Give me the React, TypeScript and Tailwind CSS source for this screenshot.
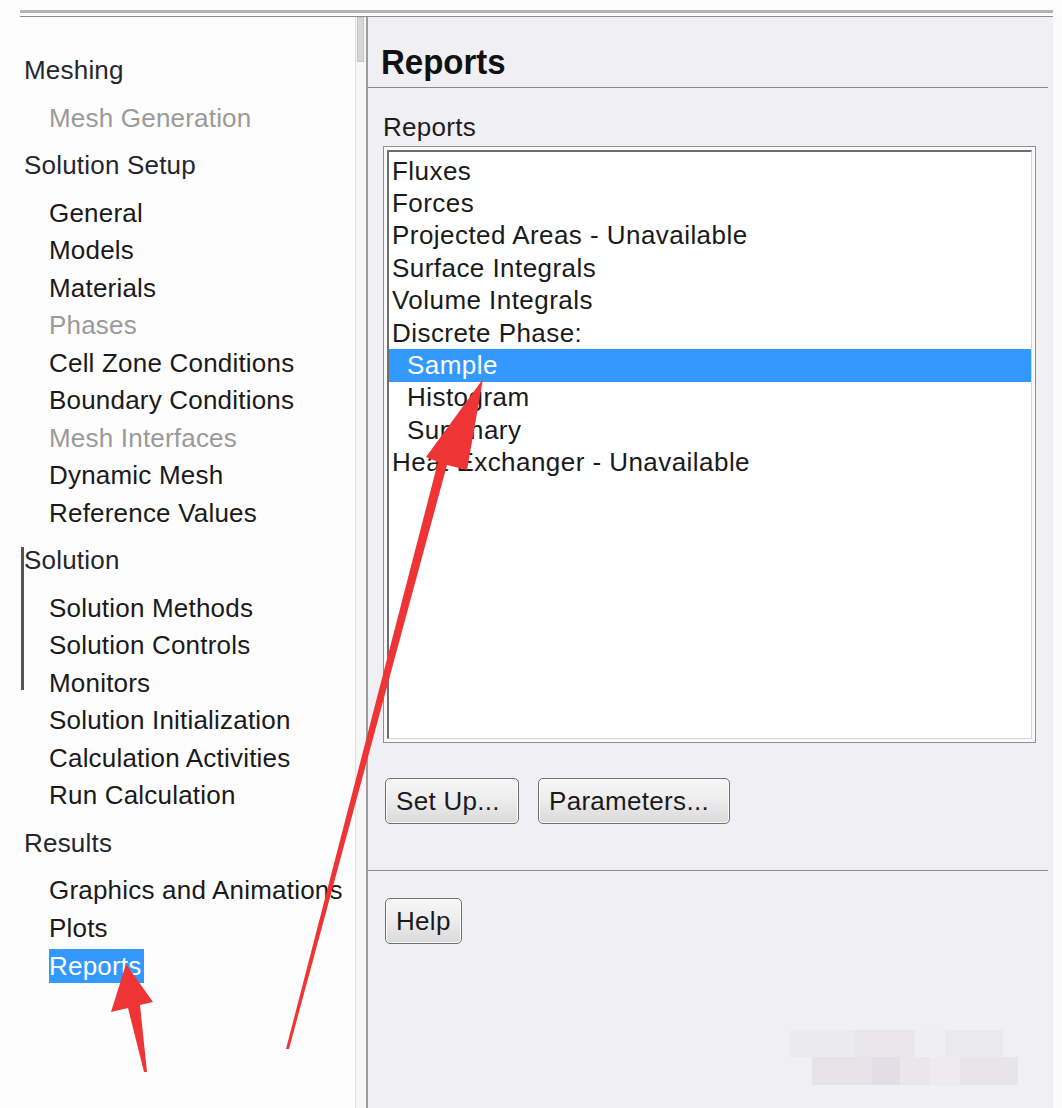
import React from "react";

type Item = { label: string; kind: "cat" | "child"; disabled?: boolean; selected?: boolean };

const nav: Item[] = [
  { label: "Meshing", kind: "cat" },
  { label: "Mesh Generation", kind: "child", disabled: true },
  { label: "Solution Setup", kind: "cat" },
  { label: "General", kind: "child" },
  { label: "Models", kind: "child" },
  { label: "Materials", kind: "child" },
  { label: "Phases", kind: "child", disabled: true },
  { label: "Cell Zone Conditions", kind: "child" },
  { label: "Boundary Conditions", kind: "child" },
  { label: "Mesh Interfaces", kind: "child", disabled: true },
  { label: "Dynamic Mesh", kind: "child" },
  { label: "Reference Values", kind: "child" },
  { label: "Solution", kind: "cat" },
  { label: "Solution Methods", kind: "child" },
  { label: "Solution Controls", kind: "child" },
  { label: "Monitors", kind: "child" },
  { label: "Solution Initialization", kind: "child" },
  { label: "Calculation Activities", kind: "child" },
  { label: "Run Calculation", kind: "child" },
  { label: "Results", kind: "cat" },
  { label: "Graphics and Animations", kind: "child" },
  { label: "Plots", kind: "child" },
  { label: "Reports", kind: "child", selected: true },
];

const reports: { label: string; sub?: boolean; selected?: boolean }[] = [
  { label: "Fluxes" },
  { label: "Forces" },
  { label: "Projected Areas - Unavailable" },
  { label: "Surface Integrals" },
  { label: "Volume Integrals" },
  { label: "Discrete Phase:" },
  { label: "Sample", sub: true, selected: true },
  { label: "Histogram", sub: true },
  { label: "Summary", sub: true },
  { label: "Heat Exchanger - Unavailable" },
];

function Btn({ label, w }: { label: string; w: string }) {
  return (
    <button
      className={`${w} h-[46px] rounded-[5px] border border-[#707070] bg-gradient-to-b from-[#f7f7f7] via-[#ececec] to-[#d9d9d9] text-left pl-[10px] text-[26px] tracking-[0.3px] leading-[30px] text-[#1a1a1a] shadow-[inset_0_0_0_1px_#fbfbfb]`}
    >
      {label}
    </button>
  );
}

export default function App() {
  return (
    <div
      className="relative w-[1062px] h-[1108px] overflow-hidden bg-[#fcfcfc]"
      style={{ fontFamily: '"Liberation Sans", Arial, sans-serif' }}
    >
      {/* top lines */}
      <div className="h-[17px] pl-[20px] pr-[9px] flex flex-col">
        <div className="h-[10px]" />
        <div className="h-[3px] bg-[#b4b4b4]" />
        <div className="h-[3px]" />
        <div className="h-[1px] bg-[#8c8c8c]" />
      </div>

      <div className="flex h-[1091px]">
        {/* left navigation */}
        <div className="relative w-[355px] bg-[#fdfdfd] pt-[25px]">
          {nav.map((it, i) => (
            <div
              key={i}
              className={
                it.kind === "cat"
                  ? "h-[37.5px] my-[10px] pl-[24px] flex items-center text-[26px] tracking-[0.2px] text-[#26262e] whitespace-nowrap"
                  : "h-[37.5px] pl-[49px] flex items-center text-[26px] tracking-[0.2px] whitespace-nowrap " +
                    (it.disabled ? "text-[#9a9a9a]" : "text-[#1a1a1a]")
              }
            >
              {it.selected ? (
                <span className="bg-[#3399ff] text-white leading-[34px] pr-[3px]">{it.label}</span>
              ) : (
                it.label
              )}
            </div>
          ))}
          <div className="absolute left-[21px] top-[530px] w-[3px] h-[143px] bg-[#555555]" />
        </div>

        {/* scrollbar */}
        <div className="w-[11px] flex flex-col bg-[#f7f7f7] border-l border-[#dedede]">
          <div className="ml-[1px] w-[7px] h-[45px] bg-[#d6d6d8] border border-[#c4c4c6]" />
        </div>

        {/* right panel */}
        <div className="w-[687px] bg-[#f0eff4] border-l-2 border-[#9c9c9c] flex flex-col pr-[5px]">
          <div className="h-[71px] pl-[13px] pt-[28px] border-b border-[#8a8a8a]">
            <div className="text-[33px] leading-[38px] font-bold text-[#111] scale-y-[1.08] origin-bottom">Reports</div>
          </div>

          <div className="pl-[15px] pr-[12px]">
            <div className="mt-[23px] text-[26px] tracking-[0.3px] leading-[32px] text-[#1d1d1d]">Reports</div>
            <div className="mt-[3px] h-[597px] border border-[#8f8f8f] bg-[#f9f9f9] p-[3px]">
              <div className="h-full bg-white border-t-2 border-l-2 border-t-[#6e6e6e] border-l-[#6e6e6e] border-r border-b border-r-[#d4d4d4] border-b-[#d4d4d4] pt-[3px]">
                {reports.map((r, i) => (
                  <div
                    key={i}
                    className={
                      "h-[32.4px] flex items-center text-[26px] tracking-[0.45px] whitespace-nowrap " +
                      (r.sub ? "pl-[18px] " : "pl-[3px] ") +
                      (r.selected ? "bg-[#3399ff] text-white" : "text-[#1a1a1a]")
                    }
                  >
                    {r.label}
                  </div>
                ))}
              </div>
            </div>

            <div className="mt-[35px] pl-[2px] flex gap-[19px]">
              <Btn label="Set Up..." w="w-[134px]" />
              <Btn label="Parameters..." w="w-[192px]" />
            </div>
          </div>

          <div className="mt-[46px] h-[1px] bg-[#8c8c8c]" />

          <div className="pl-[17px] mt-[27px]">
            <Btn label="Help" w="w-[77px]" />
          </div>
        </div>

        <div className="flex-1 bg-[#fbfbfb]" />
      </div>

      {/* faint pixelated watermark remnants */}
      <div className="absolute left-[790px] top-[1030px] flex flex-col opacity-80">
        <div className="flex">
          <div className="w-[65px] h-[27px] bg-[#ebe9ee]" />
          <div className="w-[60px] h-[27px] bg-[#e7e5ea]" />
          <div className="w-[30px] h-[27px] bg-[#efeef2]" />
          <div className="w-[58px] h-[27px] bg-[#e9e8ec]" />
        </div>
        <div className="flex pl-[22px]">
          <div className="w-[60px] h-[28px] bg-[#e3e1e6]" />
          <div className="w-[28px] h-[28px] bg-[#dedce2]" />
          <div className="w-[30px] h-[28px] bg-[#e8e6eb]" />
          <div className="w-[30px] h-[28px] bg-[#edebef]" />
          <div className="w-[58px] h-[28px] bg-[#e5e3e8]" />
        </div>
      </div>

      {/* red annotation arrows */}
      <svg className="absolute left-0 top-0 pointer-events-none" width="1062" height="1108" viewBox="0 0 1062 1108">
        <polygon
          points="286,1049 438,462 426,457 483,379 467,470 447,465 289,1049"
          fill="#ee3434"
        />
        <polygon
          points="126,964 153,1002 140,1005 147,1072 144,1072 128,1008 111,1012"
          fill="#ee3434"
        />
      </svg>
    </div>
  );
}
